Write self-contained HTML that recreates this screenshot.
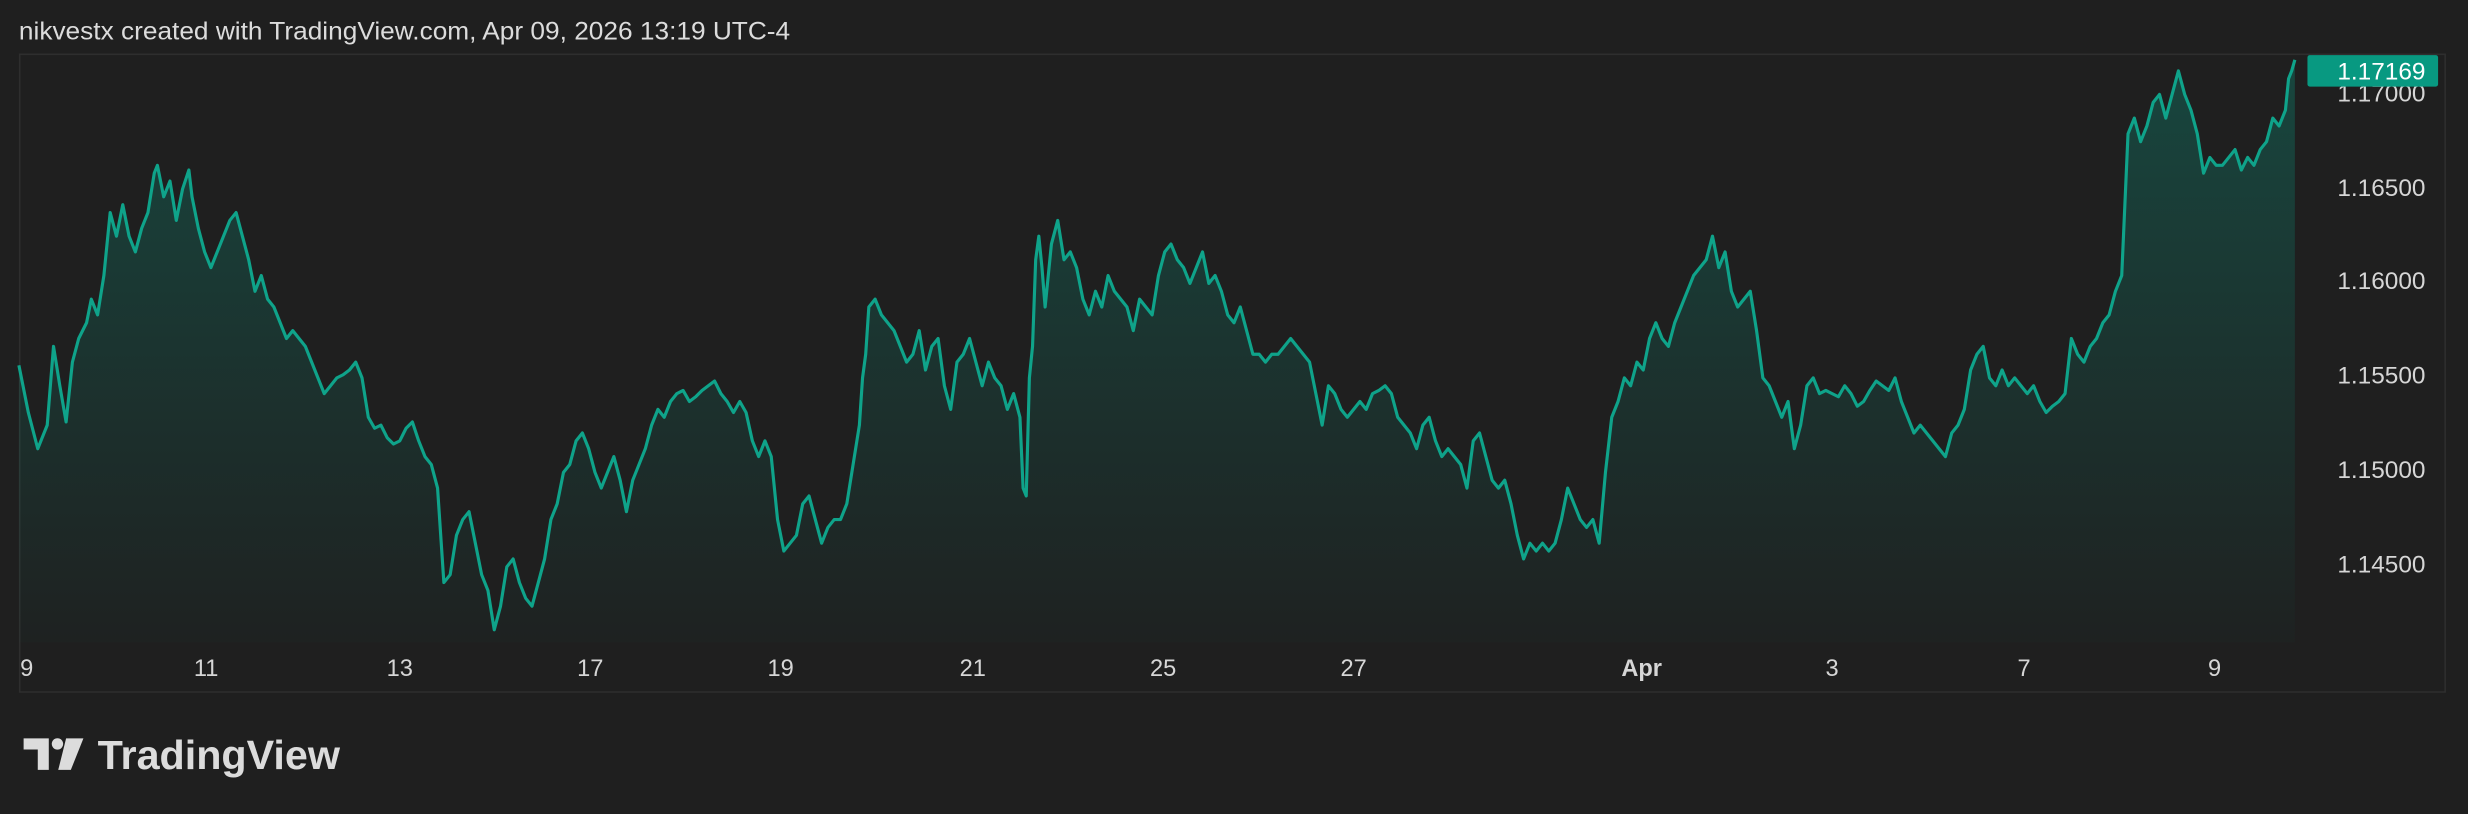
<!DOCTYPE html>
<html><head><meta charset="utf-8"><style>
html,body{margin:0;padding:0;background:#1f1f1f;overflow:hidden;}
svg{display:block}
</style></head><body>
<svg width="2468" height="814" viewBox="0 0 1568 517" preserveAspectRatio="none" xmlns="http://www.w3.org/2000/svg">
<defs>
<linearGradient id="g" x1="0" y1="0" x2="0" y2="1">
<stop offset="0" stop-color="#089981" stop-opacity="0.32"/>
<stop offset="1" stop-color="#089981" stop-opacity="0.02"/>
</linearGradient>
</defs>
<rect width="1568" height="517" fill="#1f1f1f"/>
<text x="12" y="25" font-family="Liberation Sans, sans-serif" font-size="16" fill="#dcdcdc" textLength="490" lengthAdjust="spacingAndGlyphs">nikvestx created with TradingView.com, Apr 09, 2026 13:19 UTC-4</text>
<rect x="12.5" y="34.5" width="1541" height="405" fill="none" stroke="#2e2e2e" stroke-width="1"/>
<g font-family="Liberation Sans, sans-serif" font-size="15.5" fill="#d6d6d6" text-anchor="end">
<text x="1541" y="64.5">1.17000</text>
<text x="1541" y="124.5">1.16500</text>
<text x="1541" y="183.5">1.16000</text>
<text x="1541" y="243.5">1.15500</text>
<text x="1541" y="303.5">1.15000</text>
<text x="1541" y="363.5">1.14500</text>
</g>
<path fill="url(#g)" d="M12,232 L18,262 24,285 30,270 34,220 38,245 42,268 46,230 50,215 55,205 58,190 62,200 66,175 70,135 74,150 78,130 82,150 86,160 90,145 94,135 98,110 100,105 104,125 108,115 112,140 116,120 120,108 122,125 126,145 130,160 134,170 138,160 142,150 146,140 150,135 154,150 158,165 162,185 166,175 170,190 174,195 178,205 182,215 186,210 190,215 194,220 198,230 202,240 206,250 210,245 214,240 218,238 222,235 226,230 230,240 234,265 238,272 242,270 246,278 250,282 254,280 258,272 262,268 266,280 270,290 274,295 278,310 282,370 286,365 290,340 294,330 298,325 302,345 306,365 310,375 314,400 318,385 322,360 326,355 330,370 334,380 338,385 342,370 346,355 350,330 354,320 358,300 362,295 366,280 370,275 374,285 378,300 382,310 386,300 390,290 394,305 398,325 402,305 406,295 410,285 414,270 418,260 422,265 426,255 430,250 434,248 438,255 442,252 446,248 450,245 454,242 458,250 462,255 466,262 470,255 474,262 478,280 482,290 486,280 490,290 494,330 498,350 502,345 506,340 510,320 514,315 518,330 522,345 526,335 530,330 534,330 538,320 542,295 546,270 548,240 550,225 552,195 556,190 560,200 564,205 568,210 572,220 576,230 580,225 584,210 588,235 592,220 596,215 600,245 604,260 608,230 612,225 616,215 620,230 624,245 628,230 632,240 636,245 640,260 644,250 648,265 650,310 652,315 654,240 656,220 658,165 660,150 662,170 664,195 668,155 672,140 676,165 680,160 684,170 688,190 692,200 696,185 700,195 704,175 708,185 712,190 716,195 720,210 724,190 728,195 732,200 736,175 740,160 744,155 748,165 752,170 756,180 760,170 764,160 768,180 772,175 776,185 780,200 784,205 788,195 792,210 796,225 800,225 804,230 808,225 812,225 816,220 820,215 824,220 828,225 832,230 836,250 840,270 844,245 848,250 852,260 856,265 860,260 864,255 868,260 872,250 876,248 880,245 884,250 888,265 892,270 896,275 900,285 904,270 908,265 912,280 916,290 920,285 924,290 928,295 932,310 936,280 940,275 944,290 948,305 952,310 956,305 960,320 964,340 968,355 972,345 976,350 980,345 984,350 988,345 992,330 996,310 1000,320 1004,330 1008,335 1012,330 1016,345 1020,300 1024,265 1028,255 1032,240 1036,245 1040,230 1044,235 1048,215 1052,205 1056,215 1060,220 1064,205 1068,195 1072,185 1076,175 1080,170 1084,165 1088,150 1092,170 1096,160 1100,185 1104,195 1108,190 1112,185 1116,210 1120,240 1124,245 1128,255 1132,265 1136,255 1140,285 1144,270 1148,245 1152,240 1156,250 1160,248 1164,250 1168,252 1172,245 1176,250 1180,258 1184,255 1188,248 1192,242 1196,245 1200,248 1204,240 1208,255 1212,265 1216,275 1220,270 1224,275 1228,280 1232,285 1236,290 1240,275 1244,270 1248,260 1252,235 1256,225 1260,220 1264,240 1268,245 1272,235 1276,245 1280,240 1284,245 1288,250 1292,245 1296,255 1300,262 1304,258 1308,255 1312,250 1316,215 1320,225 1324,230 1328,220 1332,215 1336,205 1340,200 1344,185 1348,175 1352,85 1356,75 1360,90 1364,80 1368,65 1372,60 1376,75 1380,60 1384,45 1388,60 1392,70 1396,85 1400,110 1404,100 1408,105 1412,105 1416,100 1420,95 1424,108 1428,100 1432,105 1436,95 1440,90 1444,75 1448,80 1452,70 1454,50 1456,45 1458,38 L1458,408 L12,408 Z"/>
<polyline fill="none" stroke="#0fa38a" stroke-width="2" stroke-linejoin="round" points="12,232 18,262 24,285 30,270 34,220 38,245 42,268 46,230 50,215 55,205 58,190 62,200 66,175 70,135 74,150 78,130 82,150 86,160 90,145 94,135 98,110 100,105 104,125 108,115 112,140 116,120 120,108 122,125 126,145 130,160 134,170 138,160 142,150 146,140 150,135 154,150 158,165 162,185 166,175 170,190 174,195 178,205 182,215 186,210 190,215 194,220 198,230 202,240 206,250 210,245 214,240 218,238 222,235 226,230 230,240 234,265 238,272 242,270 246,278 250,282 254,280 258,272 262,268 266,280 270,290 274,295 278,310 282,370 286,365 290,340 294,330 298,325 302,345 306,365 310,375 314,400 318,385 322,360 326,355 330,370 334,380 338,385 342,370 346,355 350,330 354,320 358,300 362,295 366,280 370,275 374,285 378,300 382,310 386,300 390,290 394,305 398,325 402,305 406,295 410,285 414,270 418,260 422,265 426,255 430,250 434,248 438,255 442,252 446,248 450,245 454,242 458,250 462,255 466,262 470,255 474,262 478,280 482,290 486,280 490,290 494,330 498,350 502,345 506,340 510,320 514,315 518,330 522,345 526,335 530,330 534,330 538,320 542,295 546,270 548,240 550,225 552,195 556,190 560,200 564,205 568,210 572,220 576,230 580,225 584,210 588,235 592,220 596,215 600,245 604,260 608,230 612,225 616,215 620,230 624,245 628,230 632,240 636,245 640,260 644,250 648,265 650,310 652,315 654,240 656,220 658,165 660,150 662,170 664,195 668,155 672,140 676,165 680,160 684,170 688,190 692,200 696,185 700,195 704,175 708,185 712,190 716,195 720,210 724,190 728,195 732,200 736,175 740,160 744,155 748,165 752,170 756,180 760,170 764,160 768,180 772,175 776,185 780,200 784,205 788,195 792,210 796,225 800,225 804,230 808,225 812,225 816,220 820,215 824,220 828,225 832,230 836,250 840,270 844,245 848,250 852,260 856,265 860,260 864,255 868,260 872,250 876,248 880,245 884,250 888,265 892,270 896,275 900,285 904,270 908,265 912,280 916,290 920,285 924,290 928,295 932,310 936,280 940,275 944,290 948,305 952,310 956,305 960,320 964,340 968,355 972,345 976,350 980,345 984,350 988,345 992,330 996,310 1000,320 1004,330 1008,335 1012,330 1016,345 1020,300 1024,265 1028,255 1032,240 1036,245 1040,230 1044,235 1048,215 1052,205 1056,215 1060,220 1064,205 1068,195 1072,185 1076,175 1080,170 1084,165 1088,150 1092,170 1096,160 1100,185 1104,195 1108,190 1112,185 1116,210 1120,240 1124,245 1128,255 1132,265 1136,255 1140,285 1144,270 1148,245 1152,240 1156,250 1160,248 1164,250 1168,252 1172,245 1176,250 1180,258 1184,255 1188,248 1192,242 1196,245 1200,248 1204,240 1208,255 1212,265 1216,275 1220,270 1224,275 1228,280 1232,285 1236,290 1240,275 1244,270 1248,260 1252,235 1256,225 1260,220 1264,240 1268,245 1272,235 1276,245 1280,240 1284,245 1288,250 1292,245 1296,255 1300,262 1304,258 1308,255 1312,250 1316,215 1320,225 1324,230 1328,220 1332,215 1336,205 1340,200 1344,185 1348,175 1352,85 1356,75 1360,90 1364,80 1368,65 1372,60 1376,75 1380,60 1384,45 1388,60 1392,70 1396,85 1400,110 1404,100 1408,105 1412,105 1416,100 1420,95 1424,108 1428,100 1432,105 1436,95 1440,90 1444,75 1448,80 1452,70 1454,50 1456,45 1458,38"/>
<rect x="1466" y="35" width="83" height="20" rx="1.5" fill="#089981"/>
<text x="1541" y="50.5" font-family="Liberation Sans, sans-serif" font-size="15.5" fill="#ffffff" text-anchor="end">1.17169</text>
<g font-family="Liberation Sans, sans-serif" font-size="15" fill="#d6d6d6" text-anchor="middle">
<text x="17" y="429.5">9</text>
<text x="131" y="429.5">11</text>
<text x="254" y="429.5">13</text>
<text x="375" y="429.5">17</text>
<text x="496" y="429.5">19</text>
<text x="618" y="429.5">21</text>
<text x="739" y="429.5">25</text>
<text x="860" y="429.5">27</text>
<text x="1043" y="429.5" font-weight="bold">Apr</text>
<text x="1164" y="429.5">3</text>
<text x="1286" y="429.5">7</text>
<text x="1407" y="429.5">9</text>
</g>
<g fill="#dcdcdc">
<path d="M15,469 H31 V489 H24 V476 H15 Z"/>
<circle cx="36.5" cy="472.5" r="3.6"/>
<path d="M42,469 H53 L45,489 H37 Z"/>
</g>
<text x="62" y="488.5" font-family="Liberation Sans, sans-serif" font-size="26" font-weight="bold" fill="#dcdcdc" textLength="154" lengthAdjust="spacingAndGlyphs">TradingView</text>
</svg>
</body></html>
